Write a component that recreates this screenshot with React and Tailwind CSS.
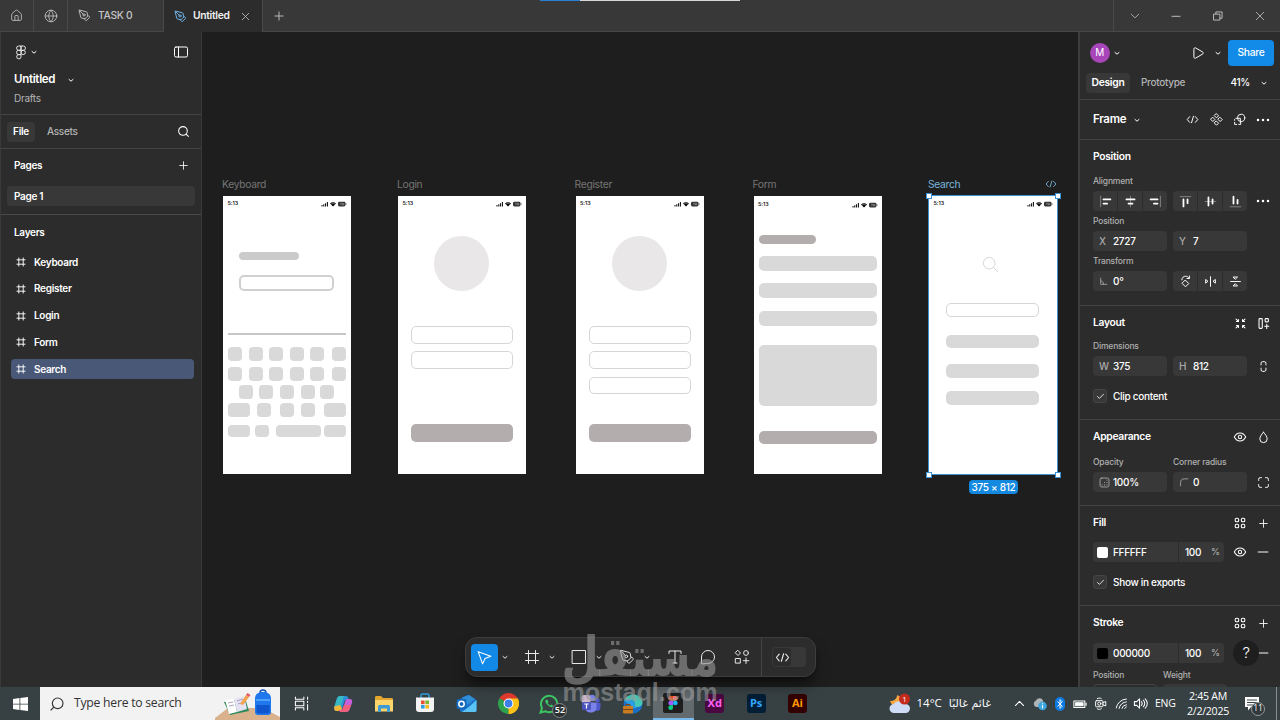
import { Check, Globe, House, PenTool, Play, Plus, Search, X } from 'lucide-react'

const Icon = ({ size = 16, sw = 1, className = '', children }) => (
  <svg
    width={size}
    height={size}
    viewBox="0 0 16 16"
    fill="none"
    stroke="currentColor"
    strokeWidth={sw}
    strokeLinecap="round"
    strokeLinejoin="round"
    className={`shrink-0 ${className}`}
  >
    {children}
  </svg>
)

const Chevron = ({ className = '' }) => (
  <svg width="8" height="8" viewBox="0 0 8 8" fill="none" stroke="currentColor" className={`shrink-0 ${className}`}>
    <path d="M1.7 3.2 4 5.2l2.3-2" />
  </svg>
)

const FrameIcon = ({ size = 16, sw = 1 }) => (
  <Icon size={size} sw={sw}>
    <path d="M4.5 1.5v13M11.5 1.5v13M1.5 4.5h13M1.5 11.5h13" />
  </Icon>
)

const CodeIcon = ({ size = 14 }) => (
  <Icon size={size} sw={1.2}>
    <path d="M4.5 4.5 1.5 8l3 3.5M11.5 4.5l3 3.5-3 3.5M9.2 4 6.8 12" />
  </Icon>
)

const DotsIcon = () => (
  <svg width="14" height="4" viewBox="0 0 14 4" fill="currentColor" className="shrink-0">
    <circle cx="2" cy="2" r="1.25" />
    <circle cx="7" cy="2" r="1.25" />
    <circle cx="12" cy="2" r="1.25" />
  </svg>
)

const EyeIcon = () => (
  <Icon size={14} sw={1.2}>
    <path d="M1.5 8C3 5 5.3 3.5 8 3.5S13 5 14.5 8C13 11 10.7 12.5 8 12.5S3 11 1.5 8Z" />
    <circle cx="8" cy="8" r="1.9" />
  </Icon>
)

const StylesIcon = () => (
  <Icon size={14} sw={1.2}>
    <rect x="2.5" y="2.5" width="4" height="4" rx="1.5" />
    <rect x="9.5" y="2.5" width="4" height="4" rx="1.5" />
    <rect x="2.5" y="9.5" width="4" height="4" rx="1.5" />
    <rect x="9.5" y="9.5" width="4" height="4" rx="1.5" />
  </Icon>
)

const MinusIcon = () => (
  <Icon size={12}>
    <path d="M1.5 8h13" strokeWidth="1.3" />
  </Icon>
)

const TitleBar = () => (
  <header className="relative flex h-8 shrink-0 items-stretch border-b border-[#474747] bg-[#383838] text-[#b8b8b8]">
    <div className="absolute left-[540px] top-0 flex h-px w-[200px]">
      <span className="w-10 bg-[#2b7fd0]" />
      <span className="flex-1 bg-[#d8d8d8]" />
    </div>
    <div className="flex w-[34px] items-center justify-center border-r border-[#4a4a4a]">
      <House size={13} strokeWidth={1.7} />
    </div>
    <div className="flex w-[34px] items-center justify-center border-r border-[#4a4a4a]">
      <Globe size={14} strokeWidth={1.6} />
    </div>
    <div className="flex w-24 items-center gap-[7px] border-r border-[#4a4a4a] pl-2.5">
      <PenTool size={13} strokeWidth={1.8} />
      <span className="text-[10.3px] font-medium text-[#c4c4c4]">TASK 0</span>
    </div>
    <div className="-mb-px flex w-[99px] items-center gap-[6px] border-r border-[#4a4a4a] bg-[#2c2c2c] pl-2.5">
      <PenTool size={13} strokeWidth={1.8} className="text-[#6fb3e8]" />
      <span className="w-[39px] shrink-0 text-[10.3px] font-semibold text-[#f0f0f0]">Untitled</span>
      <X size={13} strokeWidth={1.6} className="ml-px shrink-0" />
    </div>
    <div className="flex w-8 items-center justify-center">
      <Plus size={14} strokeWidth={1.7} />
    </div>
    <div className="ml-auto flex w-[167px] items-center border-l border-[#4a4a4a]">
      <div className="flex w-[41px] justify-center">
        <Icon size={10} sw={1.4}><path d="m2 5 6 6 6-6" /></Icon>
      </div>
      <div className="flex w-[42px] justify-center">
        <Icon size={10} sw={1.6}><path d="M1.5 8.5h13" /></Icon>
      </div>
      <div className="flex w-[42px] justify-center">
        <Icon size={10} sw={1.6}><path d="M1.5 5h9.5v9.5H1.5zM4.5 4.5v-3h10v10h-3" /></Icon>
      </div>
      <div className="flex w-[41px] justify-center">
        <Icon size={10} sw={1.4}><path d="m2 2 12 12M14 2 2 14" /></Icon>
      </div>
    </div>
  </header>
)

const layers = ['Keyboard', 'Register', 'Login', 'Form', 'Search']

const LeftPanel = () => (
  <aside className="flex w-[202px] shrink-0 flex-col border-l border-r border-[#3a3a3a] bg-[#2c2c2c] text-white">
    <div className="h-[83px] border-b border-[#444] pl-[13px]">
      <div className="flex h-10 items-center pl-px pr-3">
        <svg width="12" height="15" viewBox="0 0 12 15" fill="none" stroke="#e6e6e6" strokeWidth="1">
          <path d="M6 1H3.7a2.15 2.15 0 0 0 0 4.3H6zM6 1h2.3a2.15 2.15 0 0 1 0 4.3H6zM6 5.3H3.7a2.15 2.15 0 0 0 0 4.3H6zM6 9.6H3.7A2.15 2.15 0 1 0 6 11.75z" />
          <circle cx="8.2" cy="7.45" r="2.15" />
        </svg>
        <Chevron className="ml-[3px]" />
        <Icon size={16} className="ml-auto">
          <rect x="1.5" y="3" width="13" height="10" rx="1.5" />
          <path d="M5.5 3v10" />
        </Icon>
      </div>
      <div className="mt-px flex h-[13px] items-center text-[11.5px] font-semibold">
        <span className="w-[53px]">Untitled</span>
        <Chevron />
      </div>
      <div className="mt-[6px] flex h-[13px] items-center text-[#b4b4b4]">Drafts</div>
    </div>
    <div className="flex h-[34px] items-center border-b border-[#444] pl-1.5">
      <span className="flex h-5 w-7 items-center justify-center rounded bg-[#383838] font-semibold">File</span>
      <span className="ml-3 font-medium text-[#b4b4b4]">Assets</span>
      <Search size={13} strokeWidth={1.9} className="ml-auto mr-[11px]" />
    </div>
    <div className="h-[66px] border-b border-[#4a4a4a] px-1.5">
      <div className="flex h-[33px] items-center justify-between pl-[7px] pr-[5px]">
        <span className="font-semibold">Pages</span>
        <Plus size={13} strokeWidth={1.5} />
      </div>
      <div className="mt-1 flex h-5 items-center rounded bg-[#383838] pl-[7px] font-semibold">Page 1</div>
    </div>
    <div className="flex h-[35px] items-center pl-[13px] font-semibold">Layers</div>
    <ul className="mt-[2.3px] flex flex-col gap-[6.7px] pl-2.5 pr-[7px]">
      {layers.map((name) => (
        <li
          key={name}
          className={`flex h-5 items-center gap-2 rounded pl-[5px] font-semibold ${name === 'Search' ? 'bg-[#4a5878]' : ''}`}
        >
          <FrameIcon size={10} sw={1.5} />
          {name}
        </li>
      ))}
    </ul>
  </aside>
)

const fills = {
  key: 'bg-[#d9d9d9] rounded-[4px]',
  bar: 'bg-[#d9d9d9] rounded-[5px]',
  label: 'bg-[#cbcbcb] rounded-[4px]',
  dark: 'bg-[#b3adad] rounded-[5px]',
  circle: 'bg-[#e9e7e8] rounded-full',
  input: 'border border-[#d6d6d6] rounded-[5px]',
  thick: 'border-2 border-[#d0d0d0] rounded-[5px]',
  line: 'bg-[#c6c6c6]',
}

const keyRow = (y, keys, h = 14) => keys.map(([x, w]) => ['key', x, y, w, h])
const six = [[5, 14], [26, 14], [46, 14], [66.5, 14], [87, 14], [109, 14]]

// Each shape is [kind, x, y, width, height], measured from its artboard.
const artboards = [
  {
    name: 'Keyboard',
    x: 21,
    shapes: [
      ['label', 16, 56, 60, 8],
      ['thick', 16, 79, 95, 16],
      ['line', 5, 137, 118, 2],
      ...keyRow(151, six),
      ...keyRow(171, six),
      ...keyRow(189, [[16, 14], [36, 14], [57, 14], [77.5, 14], [97, 14]]),
      ...keyRow(207, [[5, 21.5], [33.5, 14], [57, 14], [78, 14], [101, 22]]),
      ...keyRow(229.3, [[5, 21.5], [32, 14], [52.5, 45], [101, 22]], 12),
    ],
  },
  {
    name: 'Login',
    x: 196,
    shapes: [
      ['circle', 36, 40, 55, 55],
      ['input', 13, 130, 102, 17.5],
      ['input', 13, 155, 102, 18],
      ['dark', 13, 227.5, 102, 18],
    ],
  },
  {
    name: 'Register',
    x: 373.5,
    shapes: [
      ['circle', 36, 40, 55, 55],
      ['input', 13, 130, 102, 17.5],
      ['input', 13, 155, 102, 18],
      ['input', 13, 181, 102, 17],
      ['dark', 13, 227.5, 102, 18],
    ],
  },
  {
    name: 'Form',
    x: 551.5,
    shapes: [
      ['dark', 5.5, 39, 56.5, 9],
      ['bar', 5.5, 60, 118, 15],
      ['bar', 5.5, 87, 118, 15],
      ['bar', 5.5, 114.5, 118, 15],
      ['bar', 5.5, 149, 118, 60.5],
      ['dark', 5.5, 235, 118, 13],
    ],
  },
  {
    name: 'Search',
    x: 727,
    selected: true,
    shapes: [
      ['input', 17, 107, 93, 14],
      ['bar', 17, 139, 93, 13],
      ['bar', 17, 168.3, 93, 13.5],
      ['bar', 17, 195, 93, 13.5],
    ],
  },
]

const PhoneStatus = ({ name }) => (
  <div className={`flex h-[7px] items-center justify-between pl-[4.5px] pr-1 text-[#222] ${name === 'Form' ? 'mt-[5px]' : 'mt-1'}`}>
    <span className="w-3 whitespace-nowrap text-[5.3px] font-semibold leading-none tracking-normal">5:13</span>
    <svg width="26" height="6" viewBox="0 0 26 6">
      <path d="M.5 4h1v1.5h-1zM2.3 3.2h1v2.3h-1zM4.1 2.2h1v3.3h-1zM5.9 1h1v4.5h-1z" />
      <path d="M9 2.5c1.8-1.7 4.2-1.7 6 0L12 5.5z" />
      <path d="M9.7 3.4c1.5-1.2 3.2-1.2 4.6 0" stroke="#fff" strokeWidth=".4" fill="none" />
      <rect x="17" y=".8" width="7.5" height="4.6" rx="1.4" fill="#333" />
      <rect x="24.7" y="2.2" width=".8" height="1.8" fill="#777" />
      <path d="M19 2.2h1.5L19.7 4.2M21.5 2.3h1.3v1.7h-1.3z" stroke="#ccc" strokeWidth=".4" fill="none" />
    </svg>
  </div>
)

const corners = ['-left-[3.5px] -top-[3.5px]', '-right-[3.5px] -top-[3.5px]', '-bottom-[3.5px] -left-[3.5px]', '-bottom-[3.5px] -right-[3.5px]']

const Artboard = ({ board }) => (
  <div className="absolute top-[146px] w-[128px]" style={{ left: board.x }}>
    <div className={`-ml-px flex h-[18px] items-start justify-between text-[10.3px] leading-[12px] ${board.selected ? 'text-[#78b4dc]' : 'text-[#757575]'}`}>
      {board.name}
      {board.selected && <CodeIcon size={12} />}
    </div>
    <div className="relative h-[278px] bg-white">
      <div className="flow-root">
        <PhoneStatus name={board.name} />
      </div>
      {board.shapes.map(([kind, x, y, w, h], i) => (
        <span key={i} className={`absolute ${fills[kind]}`} style={{ left: x, top: y, width: w, height: h }} />
      ))}
      {board.selected && (
        <>
          <svg width="18" height="18" viewBox="0 0 18 18" className="absolute left-[52px] top-[59px]" fill="none" stroke="#d6d6d6">
            <circle cx="8.2" cy="8.2" r="5.8" />
            <path d="m12.5 12.5 4.5 4.5" />
          </svg>
          <div className="absolute -inset-px border border-[#3f92d2]">
            {corners.map((pos) => (
              <span key={pos} className={`absolute size-1.5 border border-[#3f92d2] bg-white ${pos}`} />
            ))}
          </div>
          <span className="absolute left-10 top-[284px] flex h-[14px] w-[49px] items-center justify-center whitespace-nowrap rounded-sm bg-[#1489e0] text-[10px] font-medium text-white">
            375 × 812
          </span>
        </>
      )}
    </div>
  </div>
)

const Toolbar = () => (
  <div className="absolute left-[263px] top-[605px] flex h-10 w-[351px] items-center rounded-xl border border-[#3d3d3d] bg-[#2c2c2c] pl-[5px] text-[#e8e8e8] shadow-lg shadow-black/50">
    <div className="flex size-[27px] items-center justify-center rounded bg-[#1289e6] text-white">
      <Icon size={17}><path d="m2 2.5 4.2 11.5 2.3-5 5.5-2.2z" /></Icon>
    </div>
    <Chevron className="ml-[3px]" />
    <div className="ml-[7px] flex w-8 justify-center"><FrameIcon /></div>
    <Chevron />
    <div className="ml-[7px] flex w-8 justify-center">
      <Icon><rect x="1.5" y="1.5" width="13" height="13" /></Icon>
    </div>
    <Chevron />
    <div className="ml-2 flex w-8 justify-center">
      <PenTool size={16} strokeWidth={1.4} />
    </div>
    <Chevron />
    <div className="ml-2 flex w-8 justify-center">
      <Icon><path d="M2 4.5V2h12v2.5M8 2v12M6 14h4" /></Icon>
    </div>
    <div className="ml-px flex w-8 justify-center">
      <Icon><path d="M1.5 14.5V8A6.5 6.5 0 1 1 8 14.5z" /></Icon>
    </div>
    <div className="ml-0.5 flex w-8 justify-center">
      <Icon>
        <path d="m4 1.500 2.500 2.500L4 6.500 1.500 4zM12 9v5.500M9.300 11.700h5.500" />
        <circle cx="12" cy="4" r="2.4" />
        <rect x="1.7" y="9.5" width="4.6" height="4.6" />
      </Icon>
    </div>
    <div className="ml-[3px] h-full w-px bg-[#444]" />
    <div className="ml-2.5 flex h-5 w-[34px] items-center rounded bg-[#383838]">
      <span className="flex h-5 w-5 items-center justify-center rounded border border-[#383838] bg-[#2c2c2c]">
        <CodeIcon size={15} />
      </span>
    </div>
  </div>
)

const Canvas = () => (
  <main className="relative flex-1 bg-[#1e1e1e]">
    {artboards.map((board) => (
      <Artboard key={board.name} board={board} />
    ))}
    <Toolbar />
  </main>
)

const Field = ({ icon, value }) => (
  <div className="flex h-5 w-[74px] items-center rounded bg-[#383838] pl-[6px] font-medium">
    <span className="flex w-[14px] text-[#a8a8a8]">{icon}</span>
    {value}
  </div>
)

const Segmented = ({ items }) => (
  <div className="flex h-5 w-[74px] gap-px overflow-hidden rounded">
    {items.map((d, i) => (
      <div key={i} className="flex flex-1 items-center justify-center bg-[#383838]">
        <Icon size={13} sw={1.2}>{d}</Icon>
      </div>
    ))}
  </div>
)

const Label = ({ children, className = '' }) => (
  <div className={`flex h-[14px] items-center text-[8.5px] font-medium tracking-[-.02em] text-[#b0b0b0] ${className}`}>{children}</div>
)

const Row = ({ children, className = '' }) => (
  <div className={`flex h-5 items-center gap-[6px] ${className}`}>{children}</div>
)

const End = ({ children }) => <div className="ml-auto flex w-4 justify-center">{children}</div>

const Heading = ({ title, children }) => (
  <div className="flex h-[33px] items-center pt-px text-[10.3px] font-semibold">
    {title}
    <div className="ml-auto flex gap-[7px]">{children}</div>
  </div>
)

const Slot = ({ children }) => <span className="flex w-4 items-center justify-center">{children}</span>

const CheckRow = ({ children }) => (
  <Row className="font-medium">
    <span className="flex size-[14px] items-center justify-center rounded-[3px] border border-[#454545] bg-[#383838]">
      <Check size={9} strokeWidth={2.2} />
    </span>
    {children}
  </Row>
)

const Paint = ({ swatch, hex, children }) => (
  <div className="flex h-5 items-center">
    <div className="flex h-5 w-[85px] items-center gap-[5px] rounded-l bg-[#383838] pl-1 font-medium">
      <span className={`size-[11px] rounded-[2px] ${swatch}`} />
      {hex}
    </div>
    <div className="ml-px flex h-5 w-[45px] items-center rounded-r bg-[#383838] pl-1.5 font-medium">
      <span className="w-[26px]">100</span>
      <span className="text-[9px] text-[#a8a8a8]">%</span>
    </div>
    <div className="ml-auto flex gap-[7px]">{children}</div>
  </div>
)

const guide = { stroke: '#8a8a8a', strokeWidth: 1.1 }
const bars = { strokeWidth: 2.2 }

const alignX = [
  <><path d="M2 1.5v13" {...guide} /><path d="M5.5 5.5H14M5.5 10.5H10" {...bars} /></>,
  <><path d="M8 1.5v13" {...guide} /><path d="M3 5.5h10M5.5 10.5h5" {...bars} /></>,
  <><path d="M14 1.5v13" {...guide} /><path d="M2 5.5h8.5M6 10.5h4.5" {...bars} /></>,
]

const alignY = [
  <><path d="M1.5 2h13" {...guide} /><path d="M5.5 5.5V14M10.5 5.5V10" {...bars} /></>,
  <><path d="M1.5 8h13" {...guide} /><path d="M5.5 3v10M10.5 5.5v5" {...bars} /></>,
  <><path d="M1.5 14.5h13" {...guide} /><path d="M5.5 2v8.5M10.5 6v4.5" {...bars} /></>,
]

const transforms = [
  <path d="m8 6.5 4 4-4 4-4-4zM3.5 6C3.5 3 6 1.5 8 1.5c2 0 3.5 1 4.5 2.5M12.8 1.2V4.3h-3" />,
  <path d="M8 2v12M2 6v4l2.5-2zM14 6v4l-2.5-2z" />,
  <path d="M2 8h12M5.5 2.5h5L8 5zM5.5 13.5h5L8 11z" />,
]

const section = 'border-b border-[#444] pl-[13px] pr-[9px]'

const RightPanel = () => (
  <aside className="relative w-[202px] shrink-0 overflow-hidden border-l-2 border-[#3d3d3d] bg-[#2c2c2c] text-white">
    <div className="h-[68px] border-b border-[#444] pr-1.5">
      <div className="flex h-10 items-center pl-[9.5px] pt-px">
        <span className="flex size-5 items-center justify-center rounded-full bg-[#a845b8]">M</span>
        <Chevron className="ml-[3px]" />
        <Play size={14} strokeWidth={1.7} className="ml-auto" />
        <Chevron className="ml-[9px] mr-1.5" />
        <span className="flex h-[26px] w-[46px] items-center justify-center rounded bg-[#128ae8] text-[10.3px] font-medium">Share</span>
      </div>
      <div className="flex h-[21px] items-center pl-1.5">
        <span className="flex h-5 w-11 items-center justify-center rounded bg-[#383838] text-[10.3px] font-semibold">Design</span>
        <span className="ml-[11px] font-medium text-[#b4b4b4]">Prototype</span>
        <span className="ml-auto font-medium">41%</span>
        <Chevron className="ml-2.5 mr-1.5" />
      </div>
    </div>
    <div className={`flex h-10 items-center text-[11.5px] font-semibold ${section}`}>
      Frame
      <Chevron className="ml-[7px]" />
      <div className="ml-auto flex items-center gap-[7.5px]">
        <Slot><CodeIcon size={13} /></Slot>
        <Slot>
          <Icon size={13} sw={1.2}>
            <path d="m8 1 2.5 2.5L8 6 5.500 3.500zM8 10l2.500 2.500L8 15l-2.500-2.500zM3.500 5.500 6 8l-2.500 2.500L1 8zM12.500 5.500 15 8l-2.500 2.500L10 8z" />
          </Icon>
        </Slot>
        <Slot>
          <Icon size={13} sw={1.2}>
            <circle cx="10" cy="6" r="4.5" />
            <path d="M3.5 6.5H9V12M2 8v1M2 11.5V14h2.5M7 14h2.5V12" />
          </Icon>
        </Slot>
        <Slot><DotsIcon /></Slot>
      </div>
    </div>
    <div className={`h-[166px] ${section}`}>
      <Heading title="Position" />
      <Label className="mt-px">Alignment</Label>
      <Row className="mt-[3px]">
        <Segmented items={alignX} />
        <Segmented items={alignY} />
        <End><DotsIcon /></End>
      </Row>
      <Label className="mt-[3px]">Position</Label>
      <Row className="mt-[3px]">
        <Field icon="X" value="2727" />
        <Field icon="Y" value="7" />
      </Row>
      <Label className="mt-[3px]">Transform</Label>
      <Row className="mt-[3px]">
        <Field icon={<Icon size={9} sw={1.5}><path d="M3 2v11h11M3 7c3 0 5 2 5 6" /></Icon>} value="0°" />
        <Segmented items={transforms} />
      </Row>
    </div>
    <div className={`h-[114px] ${section}`}>
      <Heading title="Layout">
        <Slot>
          <Icon size={13} sw={1.3}>
            <path d="M2.5 2.5 5.5 5.5M5.5 3v2.5H3M13.5 2.5 10.5 5.5M10.5 3v2.5H13M2.5 13.5 5.5 10.5M3 10.5h2.5V13M13.5 13.5 10.5 10.5M10.5 13v-2.5H13" />
          </Icon>
        </Slot>
        <Slot>
          <Icon size={13} sw={1.3}>
            <rect x="2.5" y="2" width="4" height="12" rx="1" />
            <rect x="10" y="2" width="4" height="4" rx="1" />
            <path d="M12 9v5M9.5 11.5h5" />
          </Icon>
        </Slot>
      </Heading>
      <Label>Dimensions</Label>
      <Row className="mt-[3px]">
        <Field icon="W" value="375" />
        <Field icon="H" value="812" />
        <End>
          <Icon size={13} sw={1.2}><path d="M5 6V4a2 2 0 0 1 2-2h2a2 2 0 0 1 2 2v2M5 10v2a2 2 0 0 0 2 2h2a2 2 0 0 0 2-2v-2" /></Icon>
        </End>
      </Row>
      <div className="mt-2.5"><CheckRow>Clip content</CheckRow></div>
    </div>
    <div className={`h-[86px] ${section}`}>
      <Heading title="Appearance">
        <Slot><EyeIcon /></Slot>
        <Slot>
          <Icon size={13} sw={1.2}><path d="M8 1.5C5.5 4.5 3.5 7 3.5 9.8a4.5 4.5 0 0 0 9 0C12.5 7 10.5 4.5 8 1.5Z" /></Icon>
        </Slot>
      </Heading>
      <div className="mt-0.5 flex gap-[6px]">
        <Label className="w-[74px]">Opacity</Label>
        <Label>Corner radius</Label>
      </div>
      <Row className="mt-[3px]">
        <Field
          icon={
            <Icon size={11} sw={1.3}>
              <rect x="1.5" y="1.5" width="13" height="13" rx="2.5" />
              <path d="M11.5 4.5v0M8 8v0M11.5 8v0M4.5 11.5v0M8 11.5v0M11.5 11.5v0" strokeWidth="1.6" />
            </Icon>
          }
          value="100%"
        />
        <Field icon={<Icon size={10} sw={1.4}><path d="M2.5 14V9c0-4 2-6 6-6H14" /></Icon>} value="0" />
        <End>
          <Icon size={13} sw={1.2}>
            <path d="M2 5.5V4a2 2 0 0 1 2-2h1.500M10.500 2H12a2 2 0 0 1 2 2v1.500M14 10.500V12a2 2 0 0 1-2 2h-1.500M5.500 14H4a2 2 0 0 1-2-2v-1.500" />
          </Icon>
        </End>
      </Row>
    </div>
    <div className={`h-[100px] ${section}`}>
      <Heading title="Fill">
        <Slot><StylesIcon /></Slot>
        <Slot><Plus size={13} strokeWidth={1.6} /></Slot>
      </Heading>
      <div className="mt-[3px]">
        <Paint swatch="bg-white" hex="FFFFFF">
          <Slot><EyeIcon /></Slot>
          <Slot><MinusIcon /></Slot>
        </Paint>
      </div>
      <div className="mt-2.5"><CheckRow>Show in exports</CheckRow></div>
    </div>
    <div className="pl-[13px] pr-[9px]">
      <Heading title="Stroke">
        <Slot><StylesIcon /></Slot>
        <Slot><Plus size={13} strokeWidth={1.6} /></Slot>
      </Heading>
      <div className="mt-1">
        <Paint swatch="bg-black" hex="000000">
          <Slot><MinusIcon /></Slot>
        </Paint>
      </div>
      <div className="mt-[5px] flex gap-[6px]">
        <Label className="w-16">Position</Label>
        <Label>Weight</Label>
      </div>
      <div className="mt-[2px] flex gap-[6px]">
        <div className="h-5 w-16 rounded border border-[#444]" />
        <div className="h-5 w-16 rounded bg-[#383838]" />
      </div>
    </div>
    <span className="absolute left-[153px] top-[608px] flex size-[26px] items-center justify-center rounded-full bg-[#1e1e1e] text-[15px] font-light">?</span>
  </aside>
)

const Adobe = ({ text, className }) => (
  <span className={`flex size-[19px] items-center justify-center rounded-[3px] text-[11px] font-bold ${className}`}>{text}</span>
)

const apps = [
  // Copilot
  <svg width="20" height="18" viewBox="0 0 20 18">
    <path d="M7 1h6c1.5 0 2 1 2.5 2.5L16 5h-4L9 14c-.5 1.5-1.3 2-2.5 2H3.5C1.5 16 .8 14 1.3 12L4 3.5C4.5 2 5.5 1 7 1z" fill="#2b8fd9" />
    <path d="M4 3.5C4.5 2 5.5 1 7 1h4L7.5 12H1.3z" fill="#37b9c4" />
    <path d="M1.3 11.5 7 10l2 3c-.5 2-1.3 3-2.5 3h-3C1.5 16 .8 14 1.3 11.5z" fill="#f2b632" />
    <path d="M13 17H8c-1 0-1.5-1-2-2h2c1 0 1.5-1 2-2l2.5-7.5c.4-1 1-1.5 2-1.5H17c2 0 2.6 2 2 4l-2.5 6.5C16 16 15 17 13 17z" fill="#c65fd8" />
    <path d="M13 17H8c-1 0-1.5-1-2-2h2c1 0 1.5-1 2-2l1-3h7l-1.5 4.5C16 16 15 17 13 17z" fill="#f0607c" />
  </svg>,
  // Explorer
  <svg width="20" height="18" viewBox="0 0 20 18">
    <path d="M1 2.5C1 1.5 1.5 1 2.5 1H7l2 2h8.5c1 0 1.5.5 1.5 1.5V16H1z" fill="#e3a62e" />
    <path d="M1 5h18v11.5H1z" fill="#fbd56a" />
    <path d="M4 17v-5c0-1.5.5-2 2-2h8c1.5 0 2 .5 2 2v5h-3v-3.5H7V17z" fill="#3f9ad6" />
  </svg>,
  // Store
  <svg width="20" height="20" viewBox="0 0 20 20" className="-mt-0.5">
    <path d="M6 5V2.5C6 1.5 6.5 1 7.5 1h5c1 0 1.5.5 1.5 1.5V5" fill="none" stroke="#2f9bdc" strokeWidth="1.5" />
    <path d="M1 4.5h18V16c0 2-1 3-3 3H4c-2 0-3-1-3-3z" fill="#f3f3f3" />
    <path d="M6 7.5h3.6v3.6H6z" fill="#e8502f" />
    <path d="M10.4 7.5H14v3.6h-3.6z" fill="#7cb82f" />
    <path d="M6 11.9h3.6v3.6H6z" fill="#2a9fe0" />
    <path d="M10.4 11.9H14v3.6h-3.6z" fill="#f5b820" />
  </svg>,
  // Outlook
  <svg width="21" height="19" viewBox="0 0 21 19">
    <path d="M4 5 12 .8 20.5 6v10c0 1.5-.5 2-2 2H6c-1.5 0-2-.5-2-2z" fill="#1b74c9" />
    <path d="M6 3.5 13 1l6 4-8 6z" fill="#2f8fd8" />
    <path d="M20.5 6v10c0 1.5-.5 2-2 2H6l8-6z" fill="#5cc4f5" />
    <rect x=".5" y="5" width="10" height="10" rx="2" fill="#1368bd" />
    <circle cx="5.5" cy="10" r="2.7" fill="none" stroke="#fff" strokeWidth="1.5" />
  </svg>,
  // Chrome
  <svg width="21" height="21" viewBox="0 0 20 20">
    <path d="M10 10 1.34 5A10 10 0 0 1 18.66 5z" fill="#e33b2e" />
    <path d="M10 10 1.34 5A10 10 0 0 0 10 20z" fill="#2da34f" />
    <path d="M10 10 18.66 5A10 10 0 0 1 10 20z" fill="#fbc116" />
    <path d="M10 5.3h8.8A10 10 0 0 1 10 20l4-7.5z" fill="#fbc116" />
    <circle cx="10" cy="10" r="4.7" fill="#fff" />
    <circle cx="10" cy="10" r="3.7" fill="#3f7fe8" />
  </svg>,
  // WhatsApp
  <div className="relative">
    <svg width="20" height="20" viewBox="0 0 20 20" fill="none" stroke="#3cc462" strokeWidth="2">
      <path d="M1.5 18.5 3 14a8.2 8.2 0 1 1 3.2 3.2z" />
      <path d="M6.8 5.8c-1 1-.7 2.8 1.5 5 2.2 2.2 4.4 3 5.5 1.8l.4-1.2-2-1-1 1c-1-.4-2-1.5-2.5-2.5l.8-1L8.6 5.7z" fill="#3cc462" stroke="none" />
    </svg>
    <span className="absolute left-[13px] top-[9px] flex size-[15px] items-center justify-center rounded-full border border-[#888] bg-[#2b3133] text-[9px] font-semibold text-white">52</span>
  </div>,
  // Teams
  <svg width="20" height="19" viewBox="0 0 20 19">
    <circle cx="16.5" cy="6.5" r="2.3" fill="#5059c9" />
    <circle cx="11" cy="4" r="3.3" fill="#7b83eb" />
    <path d="M13 9h6.5v4.5c0 2-1.5 3.5-3.3 3.5S13 15.5 13 13.5z" fill="#5059c9" />
    <path d="M4 8.5h11.5v5c0 3-2.5 5-5.7 5S4 16.5 4 13.5z" fill="#7b83eb" />
    <rect x=".5" y="1" width="9" height="8" rx="2.5" fill="#d0b8d0" />
    <rect x="1" y="8" width="9" height="8" rx="1.5" fill="#4b53bc" />
    <path d="M3.3 10h4.4M5.5 10v4.5" stroke="#fff" strokeWidth="1.2" />
  </svg>,
  // Edge
  <svg width="21" height="20" viewBox="0 0 21 20">
    <circle cx="11" cy="10" r="9.5" fill="#1a6fc4" />
    <path d="M2 7C4 2 8 .5 11.5.5c5.5 0 9 4 9 8 0 3-2.5 4.5-5 4.5-3 0-3.5-1.5-2.5-3C13.5 6.5 7 4 2 7z" fill="#45c9b4" />
    <path d="M2 7c5-3 11-.5 11 3-1 1.500-.5 3 2.500 3-3 2.500-9 1-9-3z" fill="#2a9fe3" />
    <rect x="1" y="12" width="10" height="7.5" rx="1" fill="#c97b22" />
    <path d="M1 15.5h10M4 12v-1.500h4V12" stroke="#7b4610" fill="none" />
  </svg>,
  // Figma
  <div className="flex h-full w-full items-center justify-center border-b-2 border-[#76b9ed] bg-[#626a6e] pt-px">
    <span className="flex size-5 items-center justify-center rounded-[2px] bg-[#1e1e1e]">
      <svg width="10" height="14" viewBox="0 0 10 15">
        <path d="M5 0H2.5a2.5 2.5 0 0 0 0 5H5z" fill="#f24e1e" />
        <path d="M5 0h2.5a2.5 2.5 0 0 1 0 5H5z" fill="#ff7262" />
        <path d="M5 5H2.5a2.5 2.5 0 0 0 0 5H5z" fill="#a259ff" />
        <circle cx="7.5" cy="7.5" r="2.5" fill="#1abcfe" />
        <path d="M5 10H2.5A2.5 2.5 0 1 0 5 12.5z" fill="#0acf83" />
      </svg>
    </span>
  </div>,
  <Adobe text="Xd" className="bg-[#4a0840] text-[#ff61f6]" />,
  <Adobe text="Ps" className="bg-[#001e36] text-[#31a8ff]" />,
  <Adobe text="Ai" className="bg-[#330000] text-[#ff9a00]" />,
]

const Taskbar = () => (
  <footer className="flex h-[33px] shrink-0 items-center bg-[#374043] font-['Open_Sans','Noto_Sans',sans-serif] tracking-normal text-white">
    <div className="flex w-10 justify-center">
      <svg width="15" height="14" viewBox="0 0 15 14" fill="#fff">
        <path d="M0 2 6.5 1v5.7H0zM7.3.9 15 0v6.7H7.3zM0 7.4h6.5V13L0 12zM7.3 7.4H15V14l-7.7-1z" />
      </svg>
    </div>
    <div className="flex h-full w-60 items-center bg-[#f2f2f2] pl-[9px] text-[#333]">
      <Search size={16} strokeWidth={1.7} className="-scale-x-100" />
      <span className="ml-[9px] whitespace-nowrap text-[12.2px] tracking-[-.02em]">Type here to search</span>
      <svg width="65" height="33" viewBox="0 0 65 33" className="ml-auto">
        <path d="M0 33v-2l13-10h35l17 9v3z" fill="#d9b18c" />
        <path d="m9 15 21-4 4 13-19 4z" fill="#2f8a5b" />
        <path d="m10 13 9-1 3 13-8 2z" fill="#fff" />
        <path d="m19 12 10-3 3 13-10 3z" fill="#e6e2f3" />
        <path d="m13 16 5-1M14 19l5-1M22 14l6-2M23 17l6-2" stroke="#a9a4c0" />
        <path d="m25 17 6-9 3 2-6 8z" fill="#f4a34c" />
        <path d="m31 8 1.5-2 3 2-1.5 2z" fill="#e05a62" />
        <path d="M45 6c0-4 6-4 6 0" fill="none" stroke="#1453b8" strokeWidth="1.5" />
        <path d="M40 12c0-5 3-7 8-7s8 2 8 7v13c0 2-1 3-3 3H43c-2 0-3-1-3-3z" fill="#1f78ee" />
        <path d="M41.5 18h13v6c0 2-1 2.5-2 2.5h-9c-1 0-2-.5-2-2z" fill="#0f55cc" />
        <path d="M41 13h14" stroke="#5fb0ff" strokeWidth="1.5" />
      </svg>
    </div>
    <div className="flex w-[42px] justify-center">
      <Icon size={15} sw={1.1}><path d="M1.5 1v2.5h9V1M1.5 15v-2.5h9V15M1.5 5.5h9v5h-9zM14.5 1v2.5M14.5 9v6M14.5 5.5v1.5" /></Icon>
    </div>
    {apps.map((app, i) => (
      <div key={i} className="flex h-full w-[41.35px] shrink-0 items-center justify-center">{app}</div>
    ))}
    <div className="ml-auto flex h-full items-center">
      <svg width="22" height="22" viewBox="0 0 22 22">
        <path d="M8 2c0 4-3 6-7 6 1 4 5 6 9 4 3-1.5 4-6 2-8z" fill="#f5a742" />
        <path d="M5 20a4.5 4.5 0 0 1 0-9c1-3 8-4 10 0 4-.5 6 2 6 4.5S19 20 16.5 20z" fill="#cfdcf5" />
        <circle cx="15.5" cy="6" r="5.5" fill="#c42b1c" />
        <text x="15.5" y="9" fontSize="8" fill="#fff" textAnchor="middle">1</text>
      </svg>
      <span className="ml-1.5 w-[77px] whitespace-nowrap text-[11.5px]">
        14°C <span className="ml-1 font-['DejaVu_Sans'] text-[11px]">غائم غالبًا</span>
      </span>
      <div className="ml-[18.5px] flex w-[14px] justify-center">
        <Icon size={11} sw={1.5}><path d="m2 11 6-6 6 6" /></Icon>
      </div>
      <div className="ml-[5px] flex w-4 justify-center">
        <svg width="15" height="14" viewBox="0 0 15 14">
          <path d="M4 10a3.5 3.5 0 0 1 0-6.5C6 0 11 1 11 4.5c3 .5 3 5.5 0 5.5z" fill="#aeb4b7" />
          <circle cx="10.5" cy="9" r="4.3" fill="#3aa5e0" />
          <path d="M10.5 8.3v3M10.5 6.3v1" stroke="#fff" strokeWidth="1.2" />
        </svg>
      </div>
      <div className="ml-[5px] flex w-4 justify-center">
        <span className="flex h-[14px] w-[10px] items-center justify-center rounded-full bg-[#0f7be0]">
          <Icon size={10} sw={1.5}><path d="m4.5 4.5 7 7L8 15V1l3.5 3.5-7 7" /></Icon>
        </span>
      </div>
      <div className="ml-1 flex w-4 justify-center">
        <Icon size={14} sw={1.2}><path d="M1 4.5h12.5v7.5H1zM15 7v2.5" /><path d="M3 6.5h8.5V10H3z" fill="currentColor" /></Icon>
      </div>
      <div className="ml-1 flex w-4 justify-center">
        <Icon size={13} sw={1.2}><rect x="2" y="4.5" width="9" height="7.5" rx="1" /><circle cx="6.5" cy="8.2" r="2" /><path d="m11 7 3.5-1.5v5.5L11 9.5M4 2c1.5-1 3.5-1 5 0M4 14.5c1.5 1 3.5 1 5 0" /></Icon>
      </div>
      <div className="ml-[5px] flex w-4 justify-center">
        <Icon size={13} sw={1.2}><path d="M1.5 13.5A13 13 0 0 1 14 2.5M5 14a9.5 9.5 0 0 1 9-8M8.5 14A6 6 0 0 1 14 9.5M12 14a3 3 0 0 1 2-2" /></Icon>
      </div>
      <div className="ml-[3px] flex w-4 justify-center">
        <Icon size={15} sw={1.1}><path d="M1.5 6h2.5l3-3v10l-3-3H1.5zM9 6c1 1 1 3 0 4M11 4.5c2 2 2 5 0 7M13 3c3 3 3 7 0 10" /></Icon>
      </div>
      <span className="ml-[7px] w-5 text-[10.5px] tracking-tight">ENG</span>
      <div className="ml-[11px] flex w-11 flex-col items-center whitespace-nowrap text-[10.6px] leading-[15px] tracking-tight">
        <span>2:45 AM</span>
        <span>2/2/2025</span>
      </div>
      <div className="relative ml-[15px] flex w-5">
        <svg width="14" height="14" viewBox="0 0 14 14">
          <path d="M0 0h14v10H6l-3 3.5V10H0z" fill="#fff" />
          <path d="M2 3h10M2 5.5h10M2 8h6" stroke="#374043" />
        </svg>
        <span className="absolute left-1.5 top-[5px] flex size-[14px] items-center justify-center rounded-full border border-[#999] bg-[#30383b] text-[8.5px]">11</span>
      </div>
      <div className="ml-[11px] mr-[3px] h-full w-px bg-[#8a9093]" />
    </div>
  </footer>
)

const Watermark = () => (
  <svg width="220" height="95" viewBox="0 0 220 95" className="pointer-events-none absolute left-[530px] top-[625px] overflow-visible tracking-normal" fill="#9a9a9a" fillOpacity=".6">
    <text x="110" y="51" direction="rtl" textAnchor="middle" textLength="157" lengthAdjust="spacingAndGlyphs" className="font-['DejaVu_Sans'] text-[55px] font-bold">مستقل</text>
    <text x="110" y="76" textAnchor="middle" textLength="155" lengthAdjust="spacingAndGlyphs" className="font-['Liberation_Sans'] text-[25px] font-bold">mostaql.com</text>
  </svg>
)

const App = () => (
  <div className="relative flex h-[720px] w-[1280px] flex-col overflow-hidden bg-[#1e1e1e] font-['Inter','Liberation_Sans',sans-serif] text-[10px] tracking-[-.03em]">
    <TitleBar />
    <div className="flex min-h-0 flex-1">
      <LeftPanel />
      <Canvas />
      <RightPanel />
    </div>
    <Taskbar />
    <Watermark />
  </div>
)

export default App
